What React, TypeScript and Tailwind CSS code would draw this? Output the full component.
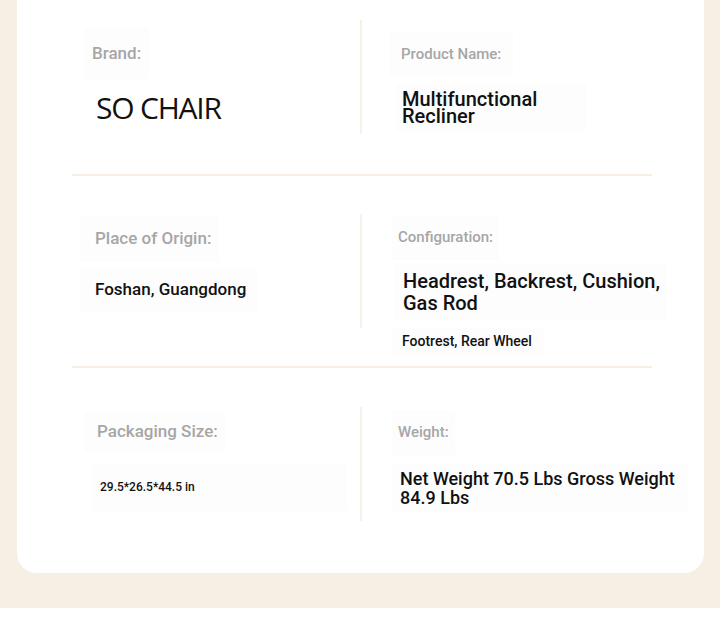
const roboto = { fontFamily: "Roboto, 'Liberation Sans', sans-serif" };

function VLine({ top }: { top: string }) {
  return <div className={`w-[2px] h-[114px] shrink-0 bg-[#f8f1e6] ${top}`} />;
}

function HLine() {
  return <div className="ml-[55px] h-[2px] w-[580px] bg-[#f7efe2]" />;
}

export default function App() {
  return (
    <div className="w-[720px] h-[643px] bg-white overflow-hidden" style={roboto}>
      <div className="h-[608px] bg-[#f6f0e4] pl-[17px] pr-[16px] pb-[35px]">
        <div className="h-[573px] bg-white rounded-b-[20px] flex flex-col">
          {/* row 1 */}
          <div className="flex h-[174px] pl-[55px]">
            <div className="w-[288px] shrink-0 flex flex-col items-start">
              <div className="mt-[28px] ml-[12px] h-[51px] px-[8px] flex items-center bg-[#fdfdfd] text-[17px] font-medium text-[#a6a6a6]">
                Brand:
              </div>
              <div
                className="mt-[8px] ml-[24px] h-[40px] flex items-center text-[30px] tracking-[-1.2px] text-[#111]"
                style={{ fontFamily: "'Open Sans', 'DejaVu Sans', sans-serif" }}
              >
                SO CHAIR
              </div>
            </div>
            <VLine top="mt-[20px] h-[113px]" />
            <div className="flex flex-col items-start">
              <div className="mt-[32px] ml-[27px] h-[44px] px-[12px] flex items-center bg-[#fdfdfd] text-[15px] font-medium text-[#a6a6a6]">
                Product Name:
              </div>
              <div className="mt-[8px] ml-[34px] h-[47px] w-[191px] px-[6px] flex flex-col justify-center bg-[#fdfdfd] text-[20px] leading-[17px] font-medium text-[#111]">
                <span>Multifunctional</span>
                <span>Recliner</span>
              </div>
            </div>
          </div>
          <HLine />
          {/* row 2 */}
          <div className="flex h-[190px] pl-[55px]">
            <div className="w-[288px] shrink-0 flex flex-col items-start">
              <div className="mt-[39px] ml-[8px] h-[47px] pl-[15px] pr-[8px] flex items-center bg-[#fdfdfd] text-[17px] font-medium text-[#a6a6a6]">
                Place of Origin:
              </div>
              <div className="mt-[6px] ml-[8px] h-[44px] pl-[15px] pr-[12px] flex items-center bg-[#fdfdfd] text-[17px] font-medium text-[#111]">
                Foshan, Guangdong
              </div>
            </div>
            <VLine top="mt-[38px]" />
            <div className="flex flex-col items-start">
              <div className="mt-[39px] ml-[30px] h-[45px] px-[6px] flex items-center bg-[#fdfdfd] text-[15px] font-medium text-[#a6a6a6]">
                Configuration:
              </div>
              <div className="mt-[3px] ml-[33px] h-[57px] w-[272px] pl-[8px] pr-[6px] flex items-center bg-[#fdfdfd] text-[20px] leading-[22px] font-medium text-[#111]">
                Headrest, Backrest, Cushion, Gas Rod
              </div>
              <div className="mt-[7px] ml-[30px] h-[29px] pl-[10px] pr-[12px] flex items-center bg-[#fdfdfd] text-[14px] font-medium text-[#111]">
                Footrest, Rear Wheel
              </div>
            </div>
          </div>
          <HLine />
          {/* row 3 */}
          <div className="flex h-[205px] pl-[55px]">
            <div className="w-[288px] shrink-0 flex flex-col items-start">
              <div className="mt-[44px] ml-[12px] h-[40px] pl-[13px] pr-[8px] flex items-center bg-[#fdfdfd] text-[17px] font-medium text-[#a6a6a6]">
                Packaging Size:
              </div>
              <div className="mt-[11px] ml-[20px] h-[48px] w-[255px] pl-[8px] flex items-center bg-[#fdfdfd] text-[12px] font-medium text-[#111]">
                29.5*26.5*44.5 in
              </div>
            </div>
            <VLine top="mt-[39px]" />
            <div className="flex flex-col items-start">
              <div className="mt-[42px] ml-[30px] h-[45px] px-[6px] flex items-center bg-[#fdfdfd] text-[15px] font-medium text-[#a6a6a6]">
                Weight:
              </div>
              <div className="mt-[8px] ml-[30px] h-[49px] w-[296px] pl-[8px] pr-[8px] flex items-center bg-[#fdfdfd] text-[18px] leading-[19px] font-medium text-[#111]">
                Net Weight 70.5 Lbs Gross Weight 84.9 Lbs
              </div>
            </div>
          </div>
        </div>
      </div>
    </div>
  );
}
